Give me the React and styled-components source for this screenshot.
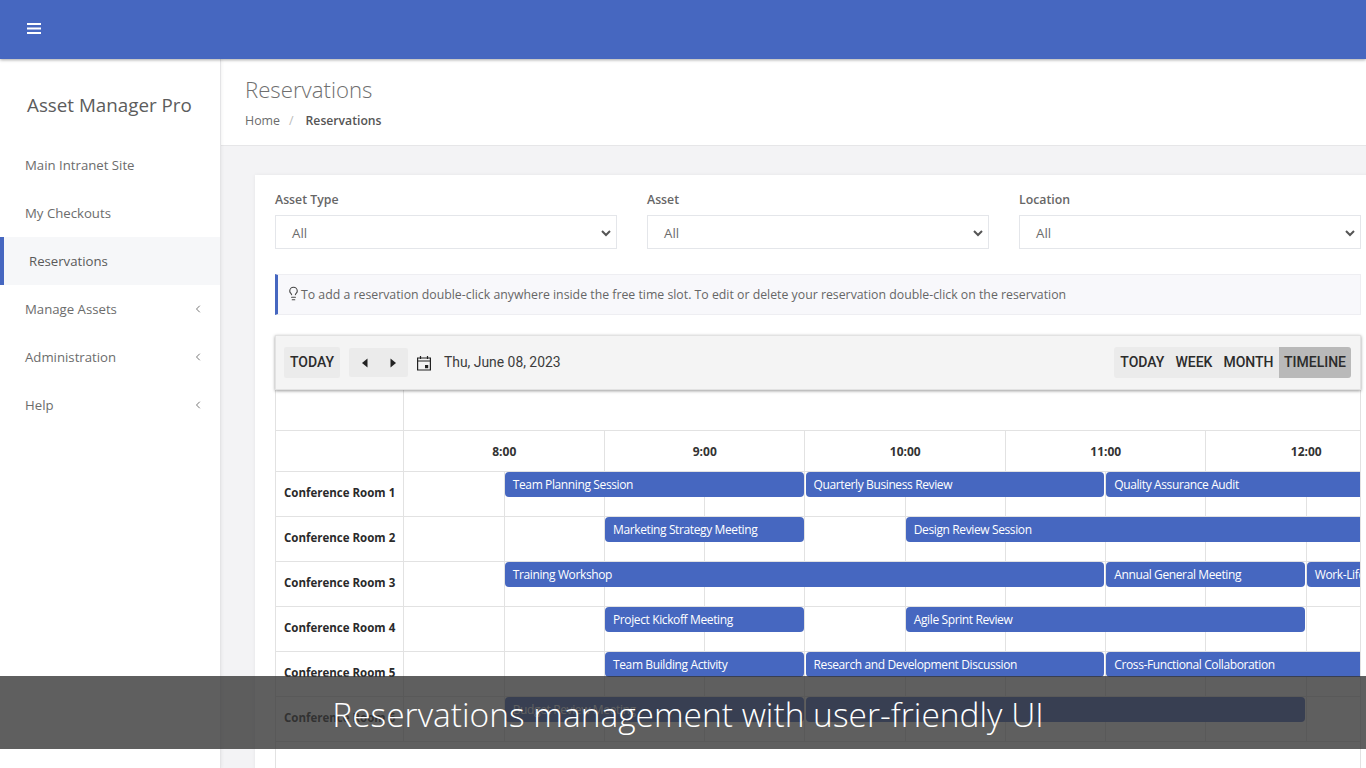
import React from 'react';
import styled, { createGlobalStyle } from 'styled-components';
import { ChevronLeft, Lightbulb } from 'lucide-react';

const SLOT = 100.25;
const Global = createGlobalStyle`
  html, body { margin: 0; padding: 0; width: 1366px; height: 768px; overflow: hidden; background: #fff; }
  * { box-sizing: border-box; }
  body { font-family: "Open Sans", "Noto Sans", sans-serif; color: #5e5e5e; }
`;
const Shell = styled.div`position: relative; width: 1366px; height: 768px; overflow: hidden; display: flex; flex-direction: column;`;
const TopBar = styled.header`height: 59px; flex: none; background: #4667c0; display: flex; align-items: center; padding: 0 0 3px 27px; box-shadow: 0 1px 3px rgba(0,0,0,.35); position: relative; z-index: 2;`;
const Burger = styled.svg`width: 14px; height: 11px; display: block;`;
const Body = styled.div`flex: 1; display: flex; min-height: 0;`;
const Sidebar = styled.aside`width: 221px; flex: none; background: #fff; border-right: 1px solid #e4e4e6; box-shadow: 1px 0 3px rgba(0,0,0,.05); position: relative; z-index: 1;`;
const Brand = styled.div`height: 82px; padding: 33px 0 0 27px; font-size: 18.8px; line-height: 26px; color: #5c5c5c;`;
const NavItem = styled.div`height: 48px; display: flex; align-items: center; justify-content: space-between; font-size: 13.2px; padding: 0 16px 0 25px;
  background: ${p => p.$active ? '#f6f7f9' : 'transparent'};
  border-left: ${p => p.$active ? '4px solid #4667c0' : 'none'};
  color: ${p => p.$active ? '#5a5a5a' : '#6c6c6c'};
`;
const Nav = styled.nav`padding-top: 0;`;
const Main = styled.main`flex: 1; min-width: 0; background: #f3f3f5; overflow: hidden;`;
const TitleBar = styled.div`height: 87px; background: #fff; border-bottom: 1px solid #e6e6e8; padding: 16px 0 0 24px;`;
const Title = styled.h1`margin: 0; font-size: 22.2px; line-height: 30px; font-weight: 300; color: #6f6f6f;`;
const Crumbs = styled.div`display: flex; align-items: center; margin-top: 7px; font-size: 12.4px; line-height: 18px;`;
const Crumb = styled.span`color: ${p => p.$strong ? '#555' : '#6c6c6c'}; font-weight: ${p => p.$strong ? 600 : 400}; font-size: ${p => p.$strong ? '12.2px' : '12.4px'};`;
const Sep = styled.span`color: #bbb; margin: 0 12px 0 9px;`;
const Card = styled.section`margin: 29px 0 0 34px; width: 1130px; background: #fff; padding: 15px 20px 0; box-shadow: 0 0 4px rgba(0,0,0,.06); height: 640px;`;
const Filters = styled.div`display: grid; grid-template-columns: repeat(3, 342px); column-gap: 30px;`;
const Field = styled.div`display: flex; flex-direction: column;`;
const FieldLabel = styled.label`font-size: 12.3px; line-height: 20px; font-weight: 600; color: #666; margin-bottom: 5px;`;
const SelectBox = styled.div`height: 34px; border: 1px solid #e4e6ea; display: flex; align-items: center; justify-content: space-between; padding: 2px 4px 0 16px; font-size: 13.3px; color: #6c6c6c; background: #fff;`;
const Hint = styled.div`margin-top: 25px; height: 41px; width: 1086px; background: #f8f8fb; border: 1px solid #eeeef2; border-left: 3px solid #4667c0; display: flex; align-items: center; padding-left: 8px; font-size: 12.3px; color: #666; white-space: nowrap;`;
const HintIcon = styled(Lightbulb)`margin-top: -2px; flex: none;`;
const Scheduler = styled.div`margin-top: 20px; width: 1086px; border-left: 1px solid #e2e2e2; border-right: 1px solid #e2e2e2; position: relative; height: 433px;`;
const Toolbar = styled.div`height: 55px; margin-left: -1px; margin-right: -1px; background: #f4f4f4; border: 1px solid #e2e2e2; box-shadow: 0 1px 3px rgba(0,0,0,.4); display: flex; align-items: center; justify-content: space-between; padding: 0 9px 0 8px; font-family: Roboto, sans-serif; position: relative; z-index: 1;`;
const Group = styled.div`display: flex; align-items: center;`;
const ToolBtn = styled.div`height: 31px; width: 56px; background: #ebebeb; border-radius: 2px; display: flex; align-items: center; justify-content: center; padding-bottom: 2px; font-size: 14px; font-weight: 500; color: #2c2c2c;`;
const ArrowGroup = styled.div`height: 29px; width: 59px; margin-left: 9px; background: #ebebeb; border-radius: 2px; display: flex; align-items: center; justify-content: center; gap: 20px;`;
const DateText = styled.span`font-size: 13.9px; color: #3c3c3c; margin-left: 13px; padding-bottom: 2px;`;
const CalIcon = styled.svg`width: 14px; height: 16px; margin-left: 9px; display: block;`;
const Views = styled.div`height: 31px; background: #ebebeb; border-radius: 3px; display: flex; align-items: stretch; overflow: hidden; padding-left: 1px;`;
const ViewBtn = styled.div`display: flex; align-items: center; padding-bottom: 2px; font-size: 14px; font-weight: 500; color: #2c2c2c; padding-left: ${p => p.$active ? '5px' : '5.5px'}; padding-right: ${p => p.$active ? '5px' : '5.5px'}; background: ${p => p.$active ? '#b9b9b9' : 'transparent'};`;
const HeaderRow = styled.div`display: flex; height: ${p => p.$h}px; border-bottom: 1px solid #e2e2e2;`;
const Corner = styled.div`width: 128px; flex: none; border-right: 1px solid #e2e2e2;`;
const Hours = styled.div`display: flex; flex: 1; overflow: hidden;`;
const Hour = styled.div`flex: none; width: ${SLOT * 2}px; border-right: 1px solid #e2e2e2; text-align: center; padding-left: 1px; font-size: 12px; font-weight: 700; color: #333; line-height: 42px;`;
const Row = styled.div`display: flex; height: 45px; border-bottom: 1px solid #e2e2e2;`;
const RowLabel = styled.div`width: 128px; flex: none; border-right: 1px solid #e2e2e2; padding: 12px 0 0 8px; font-size: 11.5px; line-height: 18px; font-weight: 700; color: #2a2a2a; white-space: nowrap;`;
const Track = styled.div`position: relative; flex: 1; overflow: hidden; display: flex;`;
const Slot = styled.div`flex: none; width: ${SLOT}px; border-right: 1px solid #e2e2e2;
  &:nth-child(odd) { width: ${SLOT + 0.5}px; }
  &:nth-child(even) { width: ${SLOT - 0.5}px; }
`;
const Event = styled.div`position: absolute; top: 0; height: 25px; background: #4667c0; border-radius: 4px; color: #fff; font-size: 12px; letter-spacing: -.38px; line-height: 25px; padding-left: 8px; white-space: nowrap; overflow: hidden;`;
const Banner = styled.div`position: absolute; left: 0; right: 0; top: 676px; height: 73px; background: rgba(52,52,52,.79); color: #fff; display: flex; align-items: center; justify-content: center; padding: 3px 0 0 10px; font-size: 33.5px; font-weight: 300; z-index: 5; white-space: nowrap;`;

const rooms = [
  ['Conference Room 1', [[1, 4, 'Team Planning Session'], [4, 7, 'Quarterly Business Review'], [7, 12, 'Quality Assurance Audit']]],
  ['Conference Room 2', [[2, 4, 'Marketing Strategy Meeting'], [5, 12, 'Design Review Session']]],
  ['Conference Room 3', [[1, 7, 'Training Workshop'], [7, 9, 'Annual General Meeting'], [9, 14, 'Work-Life Balance Workshop']]],
  ['Conference Room 4', [[2, 4, 'Project Kickoff Meeting'], [5, 9, 'Agile Sprint Review']]],
  ['Conference Room 5', [[2, 4, 'Team Building Activity'], [4, 7, 'Research and Development Discussion'], [7, 12, 'Cross-Functional Collaboration']]],
  ['Conference Room 6', [[1, 4, 'Budget Review Meeting'], [4, 9, '']]],
];

const Chevron = () => <ChevronLeft size={12} strokeWidth={1.8} color="#666" />;
const SelectArrow = () => (
  <svg width="12" height="12" viewBox="0 0 12 12"><path d="M2 4l4 4 4-4" fill="none" stroke="#555" strokeWidth="2" /></svg>
);
const Tri = ({ dir }) => (
  <svg width="8" height="10" viewBox="0 0 8 10"><path d={dir === 'l' ? 'M6.5 .5v9L1 5z' : 'M1.5 .5v9L7 5z'} fill="#222" /></svg>
);

export default function App() {
  return (
    <Shell>
      <Global />
      <TopBar>
        <Burger viewBox="0 0 14 11"><path d="M0 1h14M0 5.5h14M0 10h14" stroke="#fff" strokeWidth="2" /></Burger>
      </TopBar>
      <Body>
        <Sidebar>
          <Brand>Asset Manager Pro</Brand>
          <Nav>
            <NavItem>Main Intranet Site</NavItem>
            <NavItem>My Checkouts</NavItem>
            <NavItem $active>Reservations</NavItem>
            <NavItem>Manage Assets<Chevron /></NavItem>
            <NavItem>Administration<Chevron /></NavItem>
            <NavItem>Help<Chevron /></NavItem>
          </Nav>
        </Sidebar>
        <Main>
          <TitleBar>
            <Title>Reservations</Title>
            <Crumbs><Crumb>Home</Crumb><Sep>/</Sep><Crumb $strong>Reservations</Crumb></Crumbs>
          </TitleBar>
          <Card>
            <Filters>
              {['Asset Type', 'Asset', 'Location'].map(l => (
                <Field key={l}>
                  <FieldLabel>{l}</FieldLabel>
                  <SelectBox>All<SelectArrow /></SelectBox>
                </Field>
              ))}
            </Filters>
            <Hint>
              <HintIcon size={15} strokeWidth={1.8} color="#444" />
              To add a reservation double-click anywhere inside the free time slot. To edit or delete your reservation double-click on the reservation
            </Hint>
            <Scheduler>
              <Toolbar>
                <Group>
                  <ToolBtn>TODAY</ToolBtn>
                  <ArrowGroup><Tri dir="l" /><Tri dir="r" /></ArrowGroup>
                  <CalIcon viewBox="0 0 14 16">
                    <path d="M.6 3h12.8v12H.6zM.6 6h12.8M3.5 1v3M10.5 1v3" fill="none" stroke="#222" strokeWidth="1.2" />
                    <rect x="8" y="10" width="3.2" height="3.2" fill="#222" />
                  </CalIcon>
                  <DateText>Thu, June 08, 2023</DateText>
                </Group>
                <Views>
                  <ViewBtn>TODAY</ViewBtn>
                  <ViewBtn>WEEK</ViewBtn>
                  <ViewBtn>MONTH</ViewBtn>
                  <ViewBtn $active>TIMELINE</ViewBtn>
                </Views>
              </Toolbar>
              <HeaderRow $h={41}><Corner /></HeaderRow>
              <HeaderRow $h={41}>
                <Corner />
                <Hours>
                  {['8:00', '9:00', '10:00', '11:00', '12:00', '13:00'].map(h => <Hour key={h}>{h}</Hour>)}
                </Hours>
              </HeaderRow>
              {rooms.map(([name, events]) => (
                <Row key={name}>
                  <RowLabel>{name}</RowLabel>
                  <Track>
                    {Array.from({ length: 11 }, (_, i) => <Slot key={i} />)}
                    {events.map(([a, b, t]) => (
                      <Event key={a} style={{ left: a * SLOT + 0.5, width: (b - a) * SLOT - 2 }}>{t}</Event>
                    ))}
                  </Track>
                </Row>
              ))}
            </Scheduler>
          </Card>
        </Main>
      </Body>
      <Banner>Reservations management with user-friendly UI</Banner>
    </Shell>
  );
}
